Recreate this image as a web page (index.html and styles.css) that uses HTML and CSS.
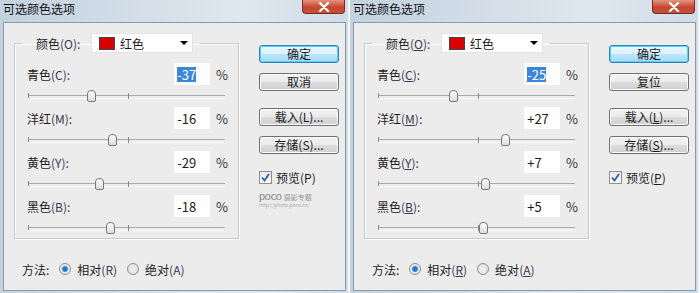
FILE: index.html
```html
<!DOCTYPE html>
<html lang="zh">
<head>
<meta charset="utf-8">
<title>可选颜色选项</title>
<link rel="stylesheet" href="styles.css">
</head>
<body>
<div class="dialog">
  <div class="titlebar">
    <span class="title">可选颜色选项</span>
    <span class="close"><svg width="14" height="10" viewBox="0 0 14 10"><path d="M3 1 L11 9 M11 1 L3 9" stroke="#fff" stroke-width="2.4" stroke-linecap="round"/></svg></span>
  </div>
  <div class="client">
    <div class="main">
      <fieldset class="group">
        <legend class="legend"><span class="lbl">颜色<span class="acc">(O):</span></span><span class="select"><span class="swatch"></span><span class="sel-text">红色</span><span class="arrow"></span></span></legend>
        <div class="row">
          <div class="row-top"><span class="lbl">青色<span class="acc">(C):</span></span><span class="field"><span class="hl">-37</span></span><span class="pct">%</span></div>
          <div class="slider"><span class="tick"></span><span class="thumb" style="left:63px"></span></div>
        </div>
        <div class="row">
          <div class="row-top"><span class="lbl">洋红<span class="acc">(M):</span></span><span class="field">-16</span><span class="pct">%</span></div>
          <div class="slider"><span class="tick"></span><span class="thumb" style="left:84px"></span></div>
        </div>
        <div class="row">
          <div class="row-top"><span class="lbl">黄色<span class="acc">(Y):</span></span><span class="field">-29</span><span class="pct">%</span></div>
          <div class="slider"><span class="tick"></span><span class="thumb" style="left:71px"></span></div>
        </div>
        <div class="row">
          <div class="row-top"><span class="lbl">黑色<span class="acc">(B):</span></span><span class="field">-18</span><span class="pct">%</span></div>
          <div class="slider"><span class="tick"></span><span class="thumb" style="left:82px"></span></div>
        </div>
      </fieldset>
      <div class="method">
        <span class="lbl">方法:</span>
        <span class="radio on"></span><span class="lbl">相对<span class="acc">(R)</span></span>
        <span class="radio"></span><span class="lbl">绝对<span class="acc">(A)</span></span>
      </div>
    </div>
    <div class="side">
      <span class="btn default">确定</span>
      <span class="btn">取消</span>
      <span class="btn gap">载入(L)...</span>
      <span class="btn">存储(S)...</span>
      <span class="check"><span class="box"><svg width="11" height="11" viewBox="0 0 11 11"><path d="M2 5.5 L4.5 8.5 L9 2" fill="none" stroke="#2a5fb0" stroke-width="1.8"/></svg></span><span class="lbl">预览(P)</span></span>
      <span class="poco"><span class="poco-logo">poco</span><span class="poco-cn">摄影专题</span><span class="poco-url">http://photo.poco.cn/</span></span>
    </div>
  </div>
</div>

<div class="dialog">
  <div class="titlebar">
    <span class="title">可选颜色选项</span>
    <span class="close"><svg width="14" height="10" viewBox="0 0 14 10"><path d="M3 1 L11 9 M11 1 L3 9" stroke="#fff" stroke-width="2.4" stroke-linecap="round"/></svg></span>
  </div>
  <div class="client">
    <div class="main">
      <fieldset class="group">
        <legend class="legend"><span class="lbl">颜色<span class="acc">(<u>O</u>):</span></span><span class="select"><span class="swatch"></span><span class="sel-text">红色</span><span class="arrow"></span></span></legend>
        <div class="row">
          <div class="row-top"><span class="lbl">青色<span class="acc">(<u>C</u>):</span></span><span class="field"><span class="hl">-25</span></span><span class="pct">%</span></div>
          <div class="slider"><span class="tick"></span><span class="thumb" style="left:75px"></span></div>
        </div>
        <div class="row">
          <div class="row-top"><span class="lbl">洋红<span class="acc">(<u>M</u>):</span></span><span class="field">+27</span><span class="pct">%</span></div>
          <div class="slider"><span class="tick"></span><span class="thumb" style="left:127px"></span></div>
        </div>
        <div class="row">
          <div class="row-top"><span class="lbl">黄色<span class="acc">(<u>Y</u>):</span></span><span class="field">+7</span><span class="pct">%</span></div>
          <div class="slider"><span class="tick"></span><span class="thumb" style="left:107px"></span></div>
        </div>
        <div class="row">
          <div class="row-top"><span class="lbl">黑色<span class="acc">(<u>B</u>):</span></span><span class="field">+5</span><span class="pct">%</span></div>
          <div class="slider"><span class="tick"></span><span class="thumb" style="left:105px"></span></div>
        </div>
      </fieldset>
      <div class="method">
        <span class="lbl">方法:</span>
        <span class="radio on"></span><span class="lbl">相对<span class="acc">(<u>R</u>)</span></span>
        <span class="radio"></span><span class="lbl">绝对<span class="acc">(<u>A</u>)</span></span>
      </div>
    </div>
    <div class="side">
      <span class="btn default">确定</span>
      <span class="btn">复位</span>
      <span class="btn gap">载入(<u>L</u>)...</span>
      <span class="btn">存储(<u>S</u>)...</span>
      <span class="check"><span class="box"><svg width="11" height="11" viewBox="0 0 11 11"><path d="M2 5.5 L4.5 8.5 L9 2" fill="none" stroke="#2a5fb0" stroke-width="1.8"/></svg></span><span class="lbl">预览(<u>P</u>)</span></span>
    </div>
  </div>
</div>
</body>
</html>
```

FILE: styles.css
```css
* { box-sizing: border-box; }
html, body { margin: 0; padding: 0; }
body {
  width: 700px;
  height: 293px;
  overflow: hidden;
  display: flex;
  gap: 2px;
  background: #f4f6f8;
  font-family: "Noto Sans CJK SC", "Noto Sans", sans-serif;
  font-size: 12px;
  color: #1c1c1c;
}
.dialog {
  width: 348px;
  height: 293px;
  display: flex;
  flex-direction: column;
  background: linear-gradient(90deg, #c3d2df 0%, #d3dee8 40%, #dfe8f0 70%, #cfdbe6 100%);
  padding: 0 2px 2px 3px;
}
.titlebar {
  height: 22px;
  display: flex;
  align-items: flex-start;
  justify-content: space-between;
}
.title {
  padding-top: 1px;
  line-height: 16px;
  color: #111;
}
.close {
  width: 43px;
  height: 14px;
  margin-right: 1px;
  display: flex;
  align-items: center;
  justify-content: center;
  background: linear-gradient(#e3937f, #c8462f 55%, #c7513a);
  border: 1px solid #7b2a20;
  border-top: none;
  border-radius: 0 0 4px 4px;
}
.client {
  flex: 1;
  display: flex;
  background: #ececec;
  border: 1px solid #8c99a6;
}
.main {
  width: 235px;
  display: flex;
  flex-direction: column;
}
.group {
  margin: 10px 0 0 10px;
  width: 225px;
  padding: 9px 10px 0 12px;
  border: 1px solid #c8c8c8;
  box-shadow: inset 1px 1px 0 #fff, 1px 1px 0 #fff;
  min-width: 0;
}
.legend {
  margin-left: -5px;
  padding: 0 7px 0 14px;
  display: flex;
  align-items: center;
  height: 20px;
}
.legend .lbl { width: 55px; }
.select {
  width: 102px;
  height: 20px;
  background: #fff;
  border: 1px solid #e4e4e4;
  display: flex;
  align-items: center;
  padding-left: 7px;
}
.swatch {
  width: 16px;
  height: 13px;
  background: #d80000;
  border: 1px solid #444;
  margin-right: 5px;
}
.sel-text { flex: 1; }
.arrow {
  width: 0;
  height: 0;
  border-left: 4px solid transparent;
  border-right: 4px solid transparent;
  border-top: 4px solid #000;
  margin-right: 4px;
}
.acc { color: #3d3551; }
u { text-decoration: underline; text-underline-offset: 1px; }
.row { height: 44px; display: flex; flex-direction: column; }
.row-top {
  height: 24px;
  display: flex;
  align-items: center;
}
.row-top .lbl { width: 148px; }
.field {
  width: 36px;
  height: 22px;
  background: #fff;
  padding-left: 3px;
  display: flex;
  align-items: center;
  font-size: 13px;
}
.hl { background: #3a86d9; color: #fff; line-height: 15px; }
.pct { margin-left: 6px; font-size: 13px; color: #333; }
.slider {
  position: relative;
  height: 20px;
  width: 200px;
  margin-left: 1px;
}
.slider::before {
  content: "";
  position: absolute;
  left: 0;
  right: 3px;
  top: 9px;
  height: 2px;
  border-top: 1px solid #a9a9a9;
  border-bottom: 1px solid #fafafa;
}
.slider::after {
  content: "";
  position: absolute;
  left: 0;
  top: 7px;
  width: 1px;
  height: 5px;
  background: #8a8a8a;
}
.tick {
  position: absolute;
  left: 100px;
  top: 7px;
  width: 1px;
  height: 6px;
  background: #8a8a8a;
}
.thumb {
  position: absolute;
  top: 4px;
  width: 9px;
  height: 12px;
  margin-left: -4px;
  background: linear-gradient(#ffffff, #dcdcdc);
  border: 1px solid #777;
  border-radius: 4px 4px 2px 2px;
}
.method {
  margin: 20px 0 0 18px;
  height: 20px;
  display: flex;
  align-items: center;
}
.radio {
  width: 12px;
  height: 12px;
  border-radius: 50%;
  border: 1px solid #8e8f8f;
  background: radial-gradient(circle, #f4f4f4, #d8d8d8);
  margin: 0 6px 0 10px;
}
.radio.on {
  background: radial-gradient(circle, #1d6fc8 0, #2f86d8 2.5px, #e8eef4 3.5px, #d4d9de 100%);
}
.side {
  margin: 22px 0 0 20px;
  display: flex;
  flex-direction: column;
  align-items: flex-start;
}
.btn {
  width: 80px;
  height: 18px;
  margin-bottom: 10px;
  display: flex;
  align-items: center;
  justify-content: center;
  border: 1px solid #707070;
  border-radius: 3px;
  background: linear-gradient(#f2f2f2 0%, #ebebeb 50%, #dddddd 51%, #cfcfcf 100%);
  box-shadow: inset 0 0 0 1px #fcfcfc;
  line-height: 14px;
}
.btn.default {
  border-color: #3c7fb1;
  background: linear-gradient(#eaf6fd 0%, #d9f0fc 50%, #bee6fd 51%, #a7d9f5 100%);
  box-shadow: inset 0 0 0 1px #48d7fb;
}
.btn.gap { margin-top: 7px; }
.check {
  margin-top: 5px;
  display: flex;
  align-items: center;
}
.box {
  width: 13px;
  height: 13px;
  border: 1px solid #8f8f8f;
  background: linear-gradient(#e8e8e8, #ffffff);
  display: flex;
  align-items: center;
  justify-content: center;
  margin-right: 4px;
}
.poco {
  margin-top: 5px;
  display: flex;
  flex-wrap: wrap;
  width: 70px;
  align-items: baseline;
  line-height: 1;
}
.poco-logo { font-family: "Liberation Sans", sans-serif; font-size: 11px; color: #888; letter-spacing: -0.3px; }
.poco-cn { font-size: 7px; color: #999; margin-left: 2px; }
.poco-url { font-size: 5px; color: #aaa; width: 100%; }
```
